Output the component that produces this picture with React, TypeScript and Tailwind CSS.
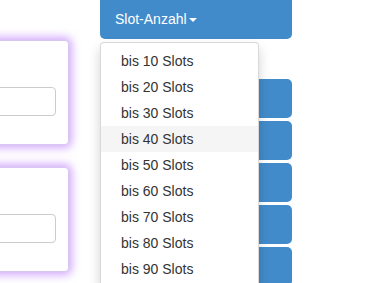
import React from 'react';

const SLOTS = [10, 20, 30, 40, 50, 60, 70, 80, 90];

const Card: React.FC = () => (
    <div className="w-[100px] h-[105px] -ml-[31px] bg-white border border-[#d8c8f0] rounded-[4px] shadow-[0_0_8px_3px_rgba(168,85,247,0.5)] pt-[46px] pr-[12px]">
        <div className="h-[29px] border border-[#ccc] rounded-[4px] bg-white" />
    </div>
);

export default function App() {
    return (
        <div className="relative w-[371px] h-[283px] overflow-hidden bg-white font-['Liberation_Sans',Arial,sans-serif] text-[14px]">
            <div className="flex">
                <div className="flex flex-col w-[100px] pt-[40px] gap-[22px]">
                    <Card />
                    <Card />
                </div>
                <div className="flex flex-col w-[192px]">
                    <button className="h-[39px] bg-[#428bca] rounded-b-[5px] text-white text-left pl-[15px] pb-[1px] flex items-center">
                        Slot-Anzahl
                        <span className="ml-[2px] mt-[1px] w-0 h-0 border-t-[4px] border-t-white border-x-[4px] border-x-transparent" />
                    </button>
                    <div className="h-[40px] relative">
                        <div className="absolute left-0 top-[19px] w-[2px] h-[2px] bg-[#f0ad4e]" />
                    </div>
                    <div className="flex flex-col gap-[3px]">
                        {[0, 1, 2, 3, 4].map(i => (
                            <div key={i} className="h-[39px] bg-[#428bca] rounded-[5px]" />
                        ))}
                    </div>
                </div>
            </div>

            <ul className="absolute left-[100px] top-[42px] w-[159px] bg-white border border-black/15 rounded-[4px] shadow-[0_6px_12px_rgba(0,0,0,0.175)] py-[5px]">
                {SLOTS.map(n => (
                    <li key={n} className={`px-[20px] py-[3px] leading-[20px] text-[#333] ${n === 40 ? 'bg-[#f5f5f5]' : ''}`}>
                        bis {n} Slots
                    </li>
                ))}
            </ul>
        </div>
    );
}
